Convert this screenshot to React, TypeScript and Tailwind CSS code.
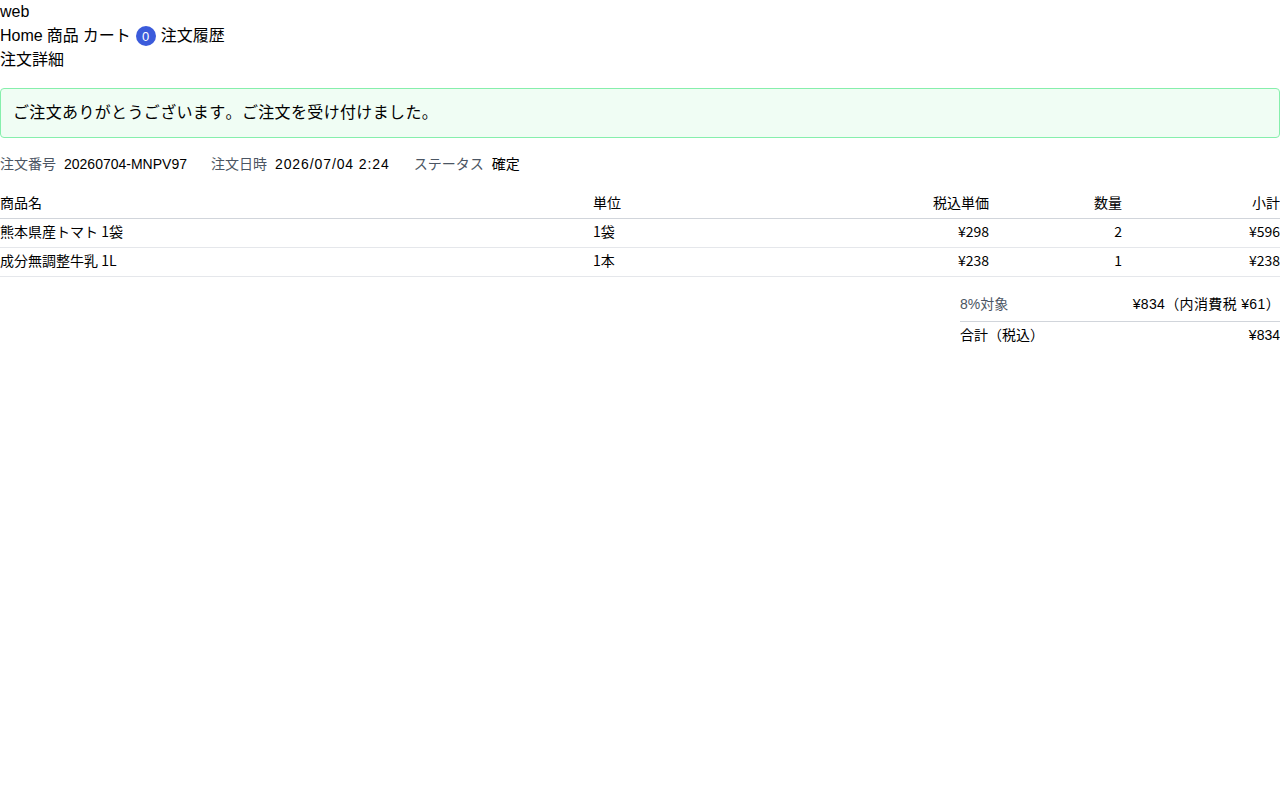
import React from "react";

export default function App() {
  const rows = [
    { name: "熊本県産トマト 1袋", unit: "1袋", price: "¥298", qty: "2", sub: "¥596" },
    { name: "成分無調整牛乳 1L", unit: "1本", price: "¥238", qty: "1", sub: "¥238" },
  ];
  return (
    <div className="text-base leading-6 text-black bg-white min-h-[800px] [font-kerning:none] [text-spacing-trim:space-all] font-['Liberation_Sans','Noto_Sans_CJK_JP',sans-serif]">
      <div>web</div>
      <nav className="flex items-center h-6 gap-[4px]">
        <span>Home</span>
        <span>商品</span>
        <span>カート</span>
        <span className="flex items-center justify-center w-5 h-5 rounded-full bg-[#3b5bdb] text-white text-[13px] leading-none ml-[1px]">
          0
        </span>
        <span className="ml-[1px]">注文履歴</span>
      </nav>
      <div>注文詳細</div>

      <div className="mt-4 border border-[#86efac] bg-[#f0fdf4] rounded px-3 py-3 tracking-[0.35px]">
        ご注文ありがとうございます。ご注文を受け付けました。
      </div>

      <div className="mt-4 flex gap-6 text-sm leading-5">
        <div className="flex gap-2">
          <span className="text-[#4b5563]">注文番号</span>
          <span>20260704-MNPV97</span>
        </div>
        <div className="flex gap-2">
          <span className="text-[#4b5563]">注文日時</span>
          <span className="tracking-[0.9px]">2026/07/04 2:24</span>
        </div>
        <div className="flex gap-2">
          <span className="text-[#4b5563]">ステータス</span>
          <span>確定</span>
        </div>
      </div>

      <table className="mt-4 w-full border-collapse text-sm leading-5 font-['Noto_Sans_CJK_JP',sans-serif] table-fixed">
        <colgroup>
          <col className="w-[593px]" />
          <col className="w-[198px]" />
          <col className="w-[198px]" />
          <col className="w-[133px]" />
          <col className="w-[158px]" />
        </colgroup>
        <thead>
          <tr className="border-b border-[#d1d5db]">
            <th className="text-left font-normal pt-[2px] pb-[6px]">商品名</th>
            <th className="text-left font-normal pt-[2px] pb-[6px]">単位</th>
            <th className="text-right font-normal pt-[2px] pb-[6px]">税込単価</th>
            <th className="text-right font-normal pt-[2px] pb-[6px]">数量</th>
            <th className="text-right font-normal pt-[2px] pb-[6px]">小計</th>
          </tr>
        </thead>
        <tbody>
          {rows.map((r) => (
            <tr key={r.name} className="border-b border-[#e5e7eb]">
              <td className="pt-[2px] pb-[6px]">{r.name}</td>
              <td className="pt-[2px] pb-[6px]">{r.unit}</td>
              <td className="pt-[2px] pb-[6px] text-right">{r.price}</td>
              <td className="pt-[2px] pb-[6px] text-right">{r.qty}</td>
              <td className="pt-[2px] pb-[6px] text-right">{r.sub}</td>
            </tr>
          ))}
        </tbody>
      </table>

      <div className="flex justify-end mt-3">
        <div className="w-[320px] text-sm leading-5">
          <div className="flex justify-between pt-[5px] pb-[7px] border-b border-[#d1d5db]">
            <span className="text-[#4b5563]">8%対象</span>
            <span className="tracking-[0.35px]">¥834（内消費税 ¥61）</span>
          </div>
          <div className="flex justify-between pt-[3px] pb-[5px]">
            <span>合計（税込）</span>
            <span>¥834</span>
          </div>
        </div>
      </div>
    </div>
  );
}
